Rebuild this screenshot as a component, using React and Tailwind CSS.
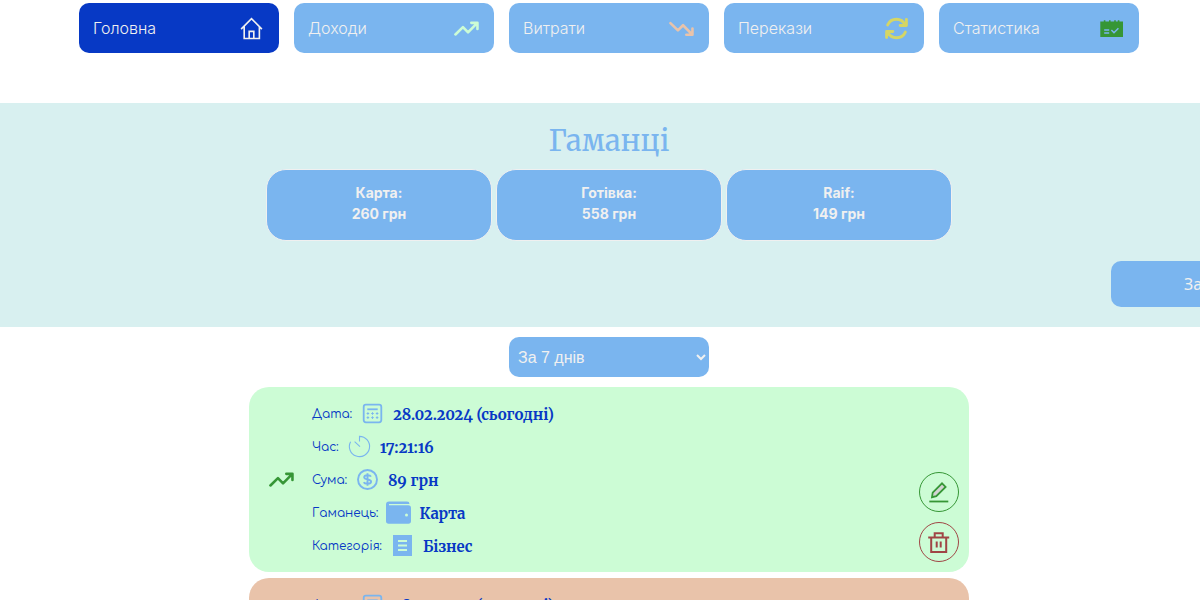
import React, { useState } from 'react';

function HomeIcon() {
  return (
    <svg width="25" height="25" viewBox="0 0 26 26" fill="none" stroke="currentColor" strokeWidth="1.7" aria-hidden="true">
      <path d="M2.2 13.6 L13 2.8 L23.8 13.6 M5.4 11v12.4h15.8V11 M10.6 23v-7h4.8v7" />
    </svg>
  );
}

function TrendUpIcon() {
  return (
    <svg width="25" height="25" viewBox="0 0 26 26" fill="none" stroke="currentColor" strokeWidth="2.7" strokeLinecap="round" strokeLinejoin="round" aria-hidden="true">
      <path d="M1.5 19.2 L9.3 11.6 L14.6 17 L23.5 8 M18 7.1h6.4v6.4" />
    </svg>
  );
}

function TrendDownIcon() {
  return (
    <svg width="25" height="25" viewBox="0 0 26 26" fill="none" stroke="currentColor" strokeWidth="2.7" strokeLinecap="round" strokeLinejoin="round" aria-hidden="true">
      <path d="M1.5 7.4 L9.3 15 L14.6 9.6 L23.5 18.6 M18 19.5h6.4v-6.4" />
    </svg>
  );
}

function TransferIcon() {
  return (
    <svg width="25" height="25" viewBox="0 0 26 26" fill="none" stroke="currentColor" strokeWidth="3" strokeLinecap="round" strokeLinejoin="round" aria-hidden="true">
      <path d="M3.8 9.3 A10 10 0 0 1 22 9.3 M23.3 3.6v6.3h-6.5 M22.2 16.7 A10 10 0 0 1 4 16.7 M2.7 22.4v-6.3h6.5" />
    </svg>
  );
}

function StatsIcon() {
  return (
    <svg width="25" height="25" viewBox="0 0 25 25" aria-hidden="true">
      <path d="M1.3 5.5h3.5V4.2h1.6v1.3h3.6V4.2h1.6v1.3h3.6V4.2h1.6v1.3h2V4.2h1.6v1.3h3.6V21H1.3z" fill="#369636" />
      <path d="M5.2 14h5M5.2 17h5M12.4 14l2.6 2.7 4.4-4.5" fill="none" stroke="#7ab5ef" strokeWidth="1.5" />
    </svg>
  );
}

function CalendarIcon() {
  return (
    <svg width="25" height="25" viewBox="0 0 25 25" fill="none" stroke="currentColor" aria-hidden="true">
      <rect x="3.7" y="3.7" width="17.6" height="17.6" rx="2.2" strokeWidth="1.8" />
      <path d="M7.3 8.3h10.4" strokeWidth="1.8" />
      <path d="M6.6 12.5h2.6M11.2 12.5h2.6M15.8 12.5h2.6M6.6 16.6h2.6M11.2 16.6h2.6M15.8 16.6h2.6M7.9 11.2v2.6M12.5 11.2v2.6M17.1 11.2v2.6M7.9 15.3v2.6M12.5 15.3v2.6M17.1 15.3v2.6" strokeWidth="1" />
    </svg>
  );
}

function TimerIcon() {
  return (
    <svg width="25" height="25" viewBox="0 0 25 25" fill="none" stroke="currentColor" strokeWidth="1.1" aria-hidden="true">
      <path d="M12.5 7.5V2.4A10.1 10.1 0 1 1 3.6 7.7M7.6 7.6l5.4 5" />
    </svg>
  );
}

function DollarIcon() {
  return (
    <svg width="25" height="25" viewBox="0 0 25 25" fill="none" stroke="currentColor" strokeWidth="1.9" aria-hidden="true">
      <circle cx="12.5" cy="12.5" r="9.5" />
      <path d="M16 9.6c-.5-1-1.7-1.4-3.5-1.4-2 0-3.3.7-3.3 2.1 0 3 6.9 1.4 6.9 4.4 0 1.4-1.5 2.1-3.6 2.1-1.9 0-3.2-.5-3.8-1.6M12.5 6.2v12.6" />
    </svg>
  );
}

function WalletIcon() {
  return (
    <svg width="25" height="25" viewBox="0 0 25 25" aria-hidden="true">
      <path d="M3 1.5h18a2.5 2.5 0 0 1 2.5 2.6H3v1.1h19.2A2.8 2.8 0 0 1 25 8v13a2.7 2.7 0 0 1-2.7 2.7H2.7A2.7 2.7 0 0 1 0 21V4.5a3 3 0 0 1 3-3z" fill="currentColor" />
      <circle cx="20.5" cy="15" r="1.5" fill="#ccfcd5" />
    </svg>
  );
}

function CategoryIcon() {
  return (
    <svg width="25" height="25" viewBox="0 0 25 25" aria-hidden="true">
      <path d="M3 2h19v21H3z" fill="currentColor" />
      <path d="M8 8h9M8 12.5h9M8 17h9" stroke="#ccfcd5" strokeWidth="2" />
    </svg>
  );
}

function EditIcon() {
  return (
    <svg width="24" height="24" viewBox="0 0 24 24" fill="none" stroke="currentColor" strokeWidth="1.8" aria-hidden="true">
      <path d="M5 17.2l.7-4.6L15 3.3l3.6 3.6-9.3 9.3z" fill="#d3d3d3" />
      <path d="M2.3 21.5h19" />
    </svg>
  );
}

function TrashIcon() {
  return (
    <svg width="24" height="24" viewBox="0 0 24 24" fill="none" stroke="currentColor" strokeWidth="2" aria-hidden="true">
      <path d="M1.2 7.5h21M4.2 7.5V22h15V7.5M7.7 7V3.2h8V7M9.7 11.5v6M13.7 11.5v6" />
    </svg>
  );
}

const tabs = [
  { label: 'Головна', Icon: HomeIcon, tint: 'text-[#f0f0f0]' },
  { label: 'Доходи', Icon: TrendUpIcon, tint: 'text-[#ccfcd5]' },
  { label: 'Витрати', Icon: TrendDownIcon, tint: 'text-[#e9c3aa]' },
  { label: 'Перекази', Icon: TransferIcon, tint: 'text-[#d5d665]' },
  { label: 'Статистика', Icon: StatsIcon, tint: 'text-[#369636]' },
];

const wallets = [
  { name: 'Карта', sum: 260 },
  { name: 'Готівка', sum: 558 },
  { name: 'Raif', sum: 149 },
];

const details = [
  { label: 'Дата:', Icon: CalendarIcon, value: '28.02.2024 (сьогодні)' },
  { label: 'Час:', Icon: TimerIcon, value: '17:21:16' },
  { label: 'Сума:', Icon: DollarIcon, value: '89 грн' },
  { label: 'Гаманець:', Icon: WalletIcon, value: 'Карта' },
  { label: 'Категорія:', Icon: CategoryIcon, value: 'Бізнес' },
];

function Operation({ income }) {
  return (
    <li className={`flex w-full max-w-[720px] items-center rounded-[20px] p-[10px] ${income ? 'bg-[#ccfcd5]' : 'bg-[#e9c3aa]'}`}>
      <span className={`flex w-[45px] shrink-0 justify-center ${income ? 'text-[#369636]' : 'text-[#a04545]'}`}>
        {income ? <TrendUpIcon /> : <TrendDownIcon />}
      </span>
      <dl className="grow pl-2 text-[#0739c5]">
        {details.map(({ label, Icon, value }) => (
          <div key={label} className="flex h-[33px] items-center">
            <dt className="pr-2 font-[Comfortaa,Inter,sans-serif] text-[12px]">{label}</dt>
            <dd className="flex items-center gap-2">
              <span className="text-[#7ab5ef]"><Icon /></span>
              <span className="pt-[2px] font-[Merriweather,'DejaVu_Serif_Condensed',serif] text-[15px] leading-5 font-bold [font-variant-numeric:oldstyle-nums]">{value}</span>
            </dd>
          </div>
        ))}
      </dl>
      <div className="flex flex-col gap-[10px] self-end">
        <button type="button" aria-label="Редагувати" className="flex size-10 items-center justify-center rounded-full border border-[#369636] text-[#369636]">
          <EditIcon />
        </button>
        <button type="button" aria-label="Видалити" className="flex size-10 items-center justify-center rounded-full border border-[#a04545] text-[#a04545]">
          <TrashIcon />
        </button>
      </div>
    </li>
  );
}

export default function App() {
  const [period, setPeriod] = useState('7');
  return (
    <div className="h-screen overflow-hidden bg-white font-[Inter,sans-serif]">
      <nav className="flex justify-center gap-[15px] pt-[3px] pl-[18px]">
        {tabs.map(({ label, Icon, tint }, i) => (
          <a key={label} href="#" className={`flex h-[50px] w-[200px] items-center justify-between rounded-[10px] pr-[15px] pl-[14px] text-[16px] font-light text-[#f0f0f0] ${i === 0 ? 'bg-[#0739c5]' : 'bg-[#7ab5ef]'}`}>
            {label}
            <span className={tint}><Icon /></span>
          </a>
        ))}
      </nav>
      <section className="mt-[50px] overflow-hidden bg-[#d8f0f0] pt-4 pb-5">
        <h1 className="pl-[18px] text-center font-[Merriweather,'DejaVu_Serif_Condensed','DejaVu_Serif',serif] text-[29px] leading-[44px] text-[#7ab5ef]">Гаманці</h1>
        <ul className="mt-[6px] flex justify-center gap-1 pl-[18px]">
          {wallets.map(({ name, sum }) => (
            <li key={name} className="flex h-[72px] w-[226px] flex-col items-center justify-center rounded-[20px] border border-[#f0f0f0] bg-[#7ab5ef] pb-[5px] text-[14px] leading-[21px] font-bold text-[#f0f0f0]">
              <span>{name}:</span>
              <span>{sum} грн</span>
            </li>
          ))}
        </ul>
        <div className="-mr-[111px] mt-5 flex justify-end">
          <button type="button" className="h-[46px] w-[200px] rounded-[10px] bg-[#7ab5ef] pl-[73px] text-left font-['Noto_Sans',sans-serif] text-[16px] text-[#f0f0f0]">Запис</button>
        </div>
      </section>
      <main className="flex flex-col items-center pt-[10px] pl-[18px]">
        <select aria-label="Період" value={period} onChange={(e) => setPeriod(e.target.value)} className="h-10 w-[200px] rounded-[10px] bg-[#7ab5ef] px-[5px] font-['Liberation_Sans',sans-serif] text-[16px] text-[#f0f0f0]">
          <option value="7">За 7 днів</option>
          <option value="30">За 30 днів</option>
        </select>
        <ul className="mt-[10px] flex w-full flex-col items-center gap-[6px]">
          <Operation income />
          <Operation />
        </ul>
      </main>
    </div>
  );
}
